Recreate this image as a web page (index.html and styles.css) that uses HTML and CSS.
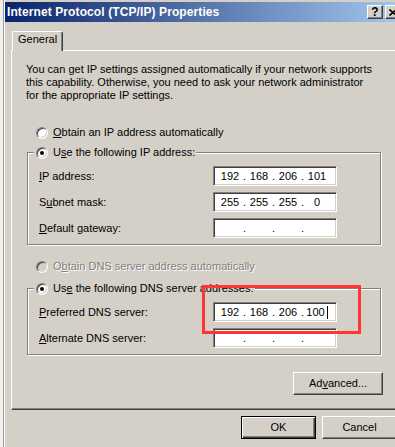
FILE: index.html
```html
<!DOCTYPE html>
<html lang="en">
  <head>
    <meta charset="UTF-8" />
    <title>Internet Protocol (TCP/IP) Properties</title>
    <link rel="stylesheet" href="styles.css">
  </head>
  <body>
    <div class="screen">
      <div class="desk"></div>

      <div class="window">
        <div class="titlebar">
          <span class="title">Internet Protocol (TCP/IP) Properties</span>
          <div class="caption-buttons">
            <span class="cap-btn">?</span>
            <span class="cap-btn">
              <svg width="8" height="7" viewBox="0 0 8 7">
                <path d="M0.5 0.5L7.5 6.5M7.5 0.5L0.5 6.5" stroke="#000" stroke-width="1.6" fill="none" />
              </svg>
            </span>
          </div>
        </div>

        <div class="tabs">
          <div class="tab">General</div>
        </div>

        <div class="panel">
          <p class="intro">
            You can get IP settings assigned automatically if your network supports<br />
            this capability. Otherwise, you need to ask your network administrator<br />
            for the appropriate IP settings.
          </p>

          <!-- IP address -->
          <div class="option first">
            <span class="radio"></span>
            <span><u>O</u>btain an IP address automatically</span>
          </div>

          <fieldset class="group">
            <legend>
              <span class="option">
                <span class="radio checked"></span>
                <span>U<u>s</u>e the following IP address:</span>
              </span>
            </legend>
            <div class="field-row">
              <span><u>I</u>P address:</span>
              <div class="ip">
                <span class="seg">192</span><span class="dot">.</span><span class="seg">168</span><span class="dot">.</span><span class="seg">206</span><span class="dot">.</span><span class="seg">101</span>
              </div>
            </div>
            <div class="field-row">
              <span>S<u>u</u>bnet mask:</span>
              <div class="ip">
                <span class="seg">255</span><span class="dot">.</span><span class="seg">255</span><span class="dot">.</span><span class="seg">255</span><span class="dot">.</span><span class="seg">0</span>
              </div>
            </div>
            <div class="field-row">
              <span><u>D</u>efault gateway:</span>
              <div class="ip">
                <span class="seg"></span><span class="dot">.</span><span class="seg"></span><span class="dot">.</span><span class="seg"></span><span class="dot">.</span><span class="seg"></span>
              </div>
            </div>
          </fieldset>

          <!-- DNS -->
          <div class="option disabled">
            <span class="radio"></span>
            <span>O<u>b</u>tain DNS server address automatically</span>
          </div>

          <fieldset class="group dns">
            <legend>
              <span class="option">
                <span class="radio checked"></span>
                <span>Us<u>e</u> the following DNS server addresses:</span>
              </span>
            </legend>
            <div class="field-row">
              <span><u>P</u>referred DNS server:</span>
              <div class="ip focused">
                <span class="seg">192</span><span class="dot">.</span><span class="seg">168</span><span class="dot">.</span><span class="seg">206</span><span class="dot">.</span><span class="seg">100</span>
              </div>
            </div>
            <div class="field-row">
              <span><u>A</u>lternate DNS server:</span>
              <div class="ip">
                <span class="seg"></span><span class="dot">.</span><span class="seg"></span><span class="dot">.</span><span class="seg"></span><span class="dot">.</span><span class="seg"></span>
              </div>
            </div>
          </fieldset>

          <div class="actions">
            <button class="btn wide">Ad<u>v</u>anced...</button>
          </div>
        </div>

        <div class="footer">
          <button class="btn default">OK</button>
          <button class="btn">Cancel</button>
        </div>
      </div>

      <!-- red box drawn over the screenshot -->
      <div class="callout"></div>
    </div>
  </body>
</html>
```

FILE: styles.css
```css
* {
  margin: 0;
  padding: 0;
  box-sizing: border-box;
}

body {
  width: 395px;
  height: 447px;
  overflow: hidden;
  background: #d4d0c8;
  font-family: "Liberation Sans", Arial, sans-serif;
  font-size: 11px;
  line-height: 13px;
  color: #000;
}

.screen {
  position: relative;
  display: flex;
  height: 447px;
}

.desk {
  flex: none;
  width: 4px;
  background: #f1f0ec;
  border-right: 1px solid #9a9a9a;
}

.window {
  flex: none;
  width: 404px;
  padding-top: 2px;
  border-left: 1px solid #fff;
}

/* title bar */
.titlebar {
  height: 20px;
  display: flex;
  align-items: center;
  justify-content: space-between;
  padding: 0 7px 0 2px;
  background: linear-gradient(to right, #0a246a, #a6caf0);
}

.title {
  color: #fff;
  font-weight: bold;
  font-size: 12px;
  letter-spacing: 0.1px;
}

.caption-buttons {
  display: flex;
  gap: 2px;
}

.cap-btn {
  width: 16px;
  height: 14px;
  display: flex;
  align-items: center;
  justify-content: center;
  background: #d4d0c8;
  border: 1px solid;
  border-color: #fff #404040 #404040 #fff;
  box-shadow: inset -1px -1px #808080;
  font-weight: bold;
  font-size: 12px;
}

/* tabs */
.tabs {
  display: flex;
  margin: 9px 0 -1px 7px;
}

.tab {
  position: relative;
  z-index: 1;
  width: 51px;
  height: 20px;
  padding: 1px 0 0 5px;
  background: #d4d0c8;
  border: 1px solid #fff;
  border-right-color: #404040;
  border-bottom: none;
  border-radius: 2px 2px 0 0;
  box-shadow: inset -1px 0 #808080;
}

.panel {
  margin: 0 6px;
  padding: 12px 0 14px;
  border: 1px solid #fff;
  border-right-color: #404040;
  border-bottom-color: #404040;
  box-shadow: inset -1px -1px #808080;
}

.intro {
  padding-left: 14px;
}

/* radio options */
.option {
  display: flex;
  align-items: center;
  gap: 5px;
  height: 13px;
  margin-left: 24px;
}

.option.first {
  margin-top: 24px;
}

.option.disabled {
  margin-top: 15px;
  color: #808080;
  text-shadow: 1px 1px #fff;
}

.radio {
  position: relative;
  flex: none;
  width: 12px;
  height: 12px;
  border-radius: 50%;
  background: #fff;
  border: 1px solid;
  border-color: #808080 #fff #fff #808080;
  box-shadow: inset 1px 1px #404040, inset -1px -1px #d4d0c8;
}

.radio.checked::after {
  content: "";
  position: absolute;
  top: 3px;
  left: 3px;
  width: 4px;
  height: 4px;
  border-radius: 50%;
  background: #000;
}

.option.disabled .radio {
  background: #d4d0c8;
}

/* group boxes */
.group {
  width: 354px;
  margin: 7px 0 0 15px;
  padding: 7px 43px 6px 11px;
  display: flex;
  flex-direction: column;
  gap: 6px;
  border: 1px solid #808080;
  box-shadow: 1px 1px #fff, inset 1px 1px #fff;
}

.group.dns {
  margin-top: 9px;
}

.group legend {
  margin-left: -5px;
  padding: 0 1px 0 2px;
  background: #d4d0c8;
}

.group legend .option {
  margin-left: 0;
}

.field-row {
  display: flex;
  align-items: center;
  justify-content: space-between;
  height: 20px;
}

.ip {
  width: 124px;
  height: 20px;
  display: flex;
  align-items: center;
  padding-left: 5px;
  background: #fff;
  border: 1px solid;
  border-color: #808080 #fff #fff #808080;
  box-shadow: inset 1px 1px #404040, inset -1px -1px #d4d0c8;
}

.seg {
  width: 22px;
  text-align: center;
}

.dot {
  width: 7px;
  text-align: center;
}

.ip.focused .seg:last-child::after {
  content: "";
  display: inline-block;
  width: 1px;
  height: 13px;
  margin-left: 2px;
  vertical-align: -3px;
  background: #000;
}

/* buttons */
.actions {
  width: 356px;
  margin: 17px 0 0 15px;
  display: flex;
  justify-content: flex-end;
}

.btn {
  width: 75px;
  height: 23px;
  background: #d4d0c8;
  border: 1px solid;
  border-color: #fff #404040 #404040 #fff;
  box-shadow: inset -1px -1px #808080;
  font: inherit;
  color: #000;
}

.btn.wide {
  width: 90px;
}

.btn.default {
  border-color: #000;
  box-shadow: inset 1px 1px #fff, inset -1px -1px #404040, inset -2px -2px #808080;
}

.footer {
  display: flex;
  justify-content: flex-end;
  gap: 6px;
  margin-top: 6px;
  padding-right: 11px;
}

.callout {
  position: absolute;
  left: 202px;
  top: 285px;
  width: 159px;
  height: 49px;
  border: 3px solid #ff3434;
}
```
